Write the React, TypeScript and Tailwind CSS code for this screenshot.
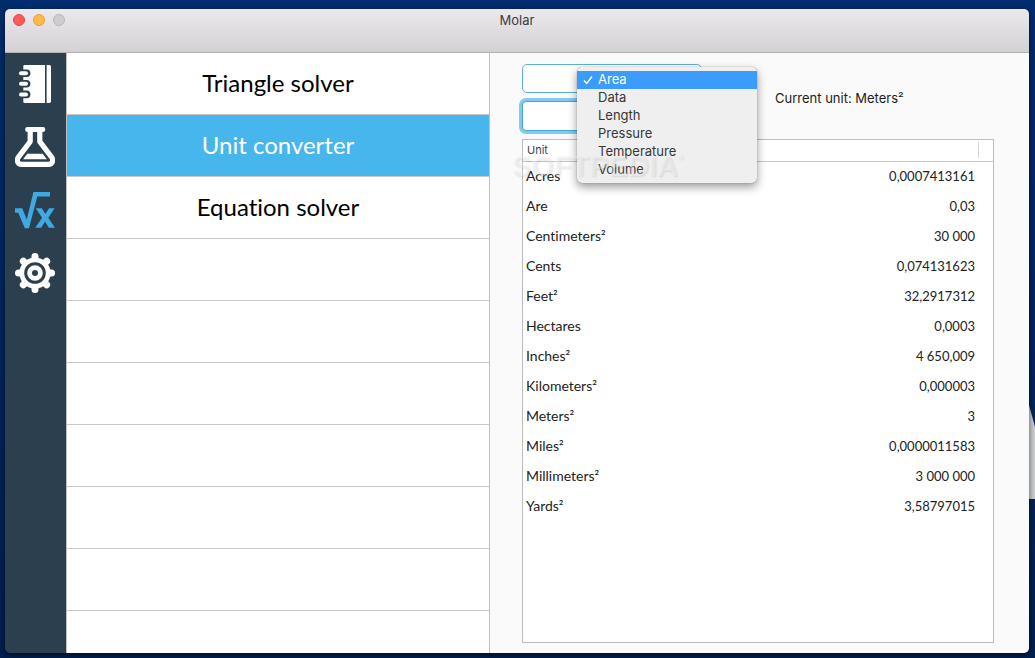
import { useState } from "react";

const tools = [
  "Triangle solver",
  "Unit converter",
  "Equation solver",
  "",
  "",
  "",
  "",
  "",
  "",
  "",
];

const categories = ["Area", "Data", "Length", "Pressure", "Temperature", "Volume"];

const rows: [string, string][] = [
  ["Acres", "0,0007413161"],
  ["Are", "0,03"],
  ["Centimeters²", "30 000"],
  ["Cents", "0,074131623"],
  ["Feet²", "32,2917312"],
  ["Hectares", "0,0003"],
  ["Inches²", "4 650,009"],
  ["Kilometers²", "0,000003"],
  ["Meters²", "3"],
  ["Miles²", "0,0000011583"],
  ["Millimeters²", "3 000 000"],
  ["Yards²", "3,58797015"],
];

function NotebookIcon() {
  return (
    <svg viewBox="0 0 40 40" className="size-10">
      <path d="M9.500 1H30v38H9.500a1.200 1.200 0 0 1-1.200-1.200V2.200A1.200 1.200 0 0 1 9.500 1Z" fill="#fff" />
      <path d="M31.600 1h2.600A1.800 1.800 0 0 1 36 2.800v34.400a1.800 1.800 0 0 1-1.800 1.800h-2.600Z" fill="#fff" />
      {[9.2, 19.8, 30.4].map((y) => (
        <g key={y} strokeLinecap="round" fill="none">
          <path d={`M7 ${y}h4.600`} stroke="#2b3f4e" strokeWidth="7.600" />
          <path d={`M6 ${y}h5`} stroke="#fff" strokeWidth="4" />
        </g>
      ))}
    </svg>
  );
}

function FlaskIcon() {
  return (
    <svg viewBox="0 0 40 40" className="size-10">
      <path d="M12.700 2.400h15" stroke="#fff" strokeWidth="5" strokeLinecap="round" />
      <path
        d="M15.200 3v11.600L3.600 29.800c-2.600 3.600-.8 7.500 3 7.500h26.800c3.800 0 5.600-3.900 3-7.500L24.800 14.600V3"
        fill="none"
        stroke="#fff"
        strokeWidth="5.200"
        strokeLinejoin="round"
      />
      <path d="M12.300 26.800h15.400l4.200 5.400H8.100Z" fill="#fff" />
    </svg>
  );
}

function RootIcon() {
  return (
    <svg viewBox="0 0 40 40" className="size-10" fill="#3fa9e2">
      <path d="M0 18.300h7.200l4.600 11.200L18.400 2H35v4.600H22.300L14 38.300H9.800L3.200 22.800H0Z" />
      <path d="M20.700 18.300h6.100l3.600 5.800 3.600-5.800h5.600l-6.300 9.400 6.600 10h-6.100l-3.800-6.200-3.800 6.200h-5.900l6.800-10Z" />
    </svg>
  );
}

function GearIcon() {
  return (
    <svg viewBox="0 0 40 40" className="size-10">
      <g stroke="#fff" strokeWidth="7" strokeLinecap="round">
        {[0, 45, 90, 135].map((a) => (
          <path key={a} d="M20 3.500v33" transform={`rotate(${a} 20 20)`} />
        ))}
      </g>
      <circle cx="20" cy="20" r="15.600" fill="#fff" />
      <circle cx="20" cy="20" r="9.300" fill="#fff" stroke="#2b3f4e" strokeWidth="3" />
      <circle cx="20" cy="20" r="3" fill="#2b3f4e" />
    </svg>
  );
}

const sections = [
  { label: "Notes", Icon: NotebookIcon },
  { label: "Chemistry", Icon: FlaskIcon },
  { label: "Math", Icon: RootIcon },
  { label: "Settings", Icon: GearIcon },
];

export default function App() {
  const [category, setCategory] = useState("Area");
  const [tool, setTool] = useState("Unit converter");

  return (
    <div className="relative h-screen overflow-hidden bg-[#002561] bg-linear-to-b from-[#002d6e] to-[#001f50] pt-[9px] pr-[6px] pb-[5px] pl-[5px] font-['Lato',sans-serif] [font-variant-ligatures:none]">
      <svg viewBox="0 0 6 94" className="absolute top-[405px] right-0 h-[94px] w-[6px]">
        <path d="M0 0 6 22V94H0Z" fill="#cdced0" />
      </svg>

      <div className="relative flex h-full flex-col overflow-hidden rounded-[5px] shadow-[0_2px_6px_rgba(0,0,0,0.6)]">
        <header className="relative h-11 shrink-0 border-b border-[#b3b0b4] bg-linear-to-b from-[#ebe9eb] to-[#d3d1d3] pt-[3px]">
          <h1 className="text-center font-['Inter',sans-serif] text-[13px] leading-4 text-[#3c3c3c]">Molar</h1>
          <div className="absolute top-[5px] left-2 flex gap-2">
            <button aria-label="Close" className="size-3 rounded-full border border-[#e0484a] bg-[#fc5b5b]" />
            <button aria-label="Minimize" className="size-3 rounded-full border border-[#e0a03a] bg-[#fdb944]" />
            <button aria-label="Zoom" className="size-3 rounded-full border border-[#b8b6b8] bg-[#cecccd]" />
          </div>
        </header>

        <div className="flex min-h-0 flex-1">
          <nav className="flex w-[61px] shrink-0 flex-col gap-[23px] bg-[#2b3f4e] pt-[11px] pl-[10px]">
            {sections.map(({ label, Icon }) => (
              <button key={label} aria-label={label} className="size-10">
                <Icon />
              </button>
            ))}
          </nav>

          <ul className="w-[424px] shrink-0 overflow-hidden border-x border-[#bfbfbf] bg-white">
            {tools.map((name, i) => (
              <li key={i} className="h-[62px] border-b border-[#c8c8c8]">
                {name && (
                  <button
                    onClick={() => setTool(name)}
                    className={
                      name === tool
                        ? "h-full w-full bg-[#47b6ec] pb-[2px] text-[24px] text-white"
                        : "h-full w-full pb-[2px] text-[24px] text-black"
                    }
                  >
                    {name}
                  </button>
                )}
              </li>
            ))}
          </ul>

          <main className="relative flex min-w-0 flex-1 flex-col gap-2 bg-[#fafafa] pt-[11px] pr-[35px] pb-[10px] pl-8">
            <div className="flex items-center gap-[73px]">
              <div className="relative flex w-[180px] flex-col gap-2">
                <select
                  aria-label="Category"
                  value={category}
                  onChange={(e) => setCategory(e.target.value)}
                  className="h-[29px] w-full appearance-none rounded-[5px] border border-[#5fafd0] bg-white text-transparent"
                >
                  {categories.map((c) => (
                    <option key={c}>{c}</option>
                  ))}
                </select>
                <input
                  aria-label="Value"
                  className="h-[30px] w-full rounded-[4px] border border-[#45a5d6] bg-white ring-3 ring-[#85c9ee] outline-none"
                />
                <div
                  role="listbox"
                  aria-label="Categories"
                  className="absolute top-[3px] left-[55px] z-10 w-[180px] rounded-[5px] bg-[#efefef] py-1 font-['Inter',sans-serif] text-[13px] shadow-[0_0_1px_rgba(0,0,0,0.5),0_4px_10px_rgba(0,0,0,0.4)]"
                >
                  {categories.map((c) => (
                    <button
                      key={c}
                      role="option"
                      aria-selected={c === category}
                      onClick={() => setCategory(c)}
                      className={
                        c === category
                          ? "flex h-[18px] w-full items-center bg-[#3b9cfc] text-white"
                          : "flex h-[18px] w-full items-center text-[#363636]"
                      }
                    >
                      <span className="flex w-[21px] justify-center">
                        {c === category && (
                          <svg viewBox="0 0 10 10" className="size-[10px]">
                            <path d="m1 5.500 2.700 3L9 1.500" fill="none" stroke="#fff" strokeWidth="1.400" />
                          </svg>
                        )}
                      </span>
                      {c}
                    </button>
                  ))}
                </div>
              </div>
              <p className="pt-[2px] font-['Inter',sans-serif] text-[13px] text-[#1c1c1c]">Current unit: Meters²</p>
            </div>

            <div className="min-h-0 flex-1 border border-[#bdbdbd] bg-white">
              <table className="w-full border-collapse text-[#222]">
                <thead>
                  <tr className="h-[21px] border-b border-[#c6c6c6]">
                    <th className="p-0 pl-1 text-left font-['Inter',sans-serif] text-[11px] leading-4 font-normal text-[#444]">
                      Unit
                    </th>
                    <th aria-label="Value" className="p-0">
                      <div className="ml-auto h-4 w-px bg-[#d4d4d4]" />
                    </th>
                    <th aria-hidden="true" className="w-[14px] p-0" />
                  </tr>
                </thead>
                <tbody>
                  {rows.map(([unit, value]) => (
                    <tr key={unit} className="h-[30px]">
                      <td className="p-0 pl-[3px] text-[14px] leading-5">{unit}</td>
                      <td className="p-0 pr-1 text-right text-[13px] leading-5">{value}</td>
                      <td className="p-0" />
                    </tr>
                  ))}
                </tbody>
              </table>
            </div>

            <div
              aria-hidden="true"
              className="pointer-events-none absolute top-[95px] left-[22px] z-20 flex items-start font-['Liberation_Sans',sans-serif] text-[29px] leading-9 font-bold text-white/35 [text-shadow:1px_1px_2px_rgba(0,0,0,0.1)]"
            >
              SOFTPEDIA<span className="text-[8px] leading-5">®</span>
            </div>
          </main>
        </div>
      </div>
    </div>
  );
}
